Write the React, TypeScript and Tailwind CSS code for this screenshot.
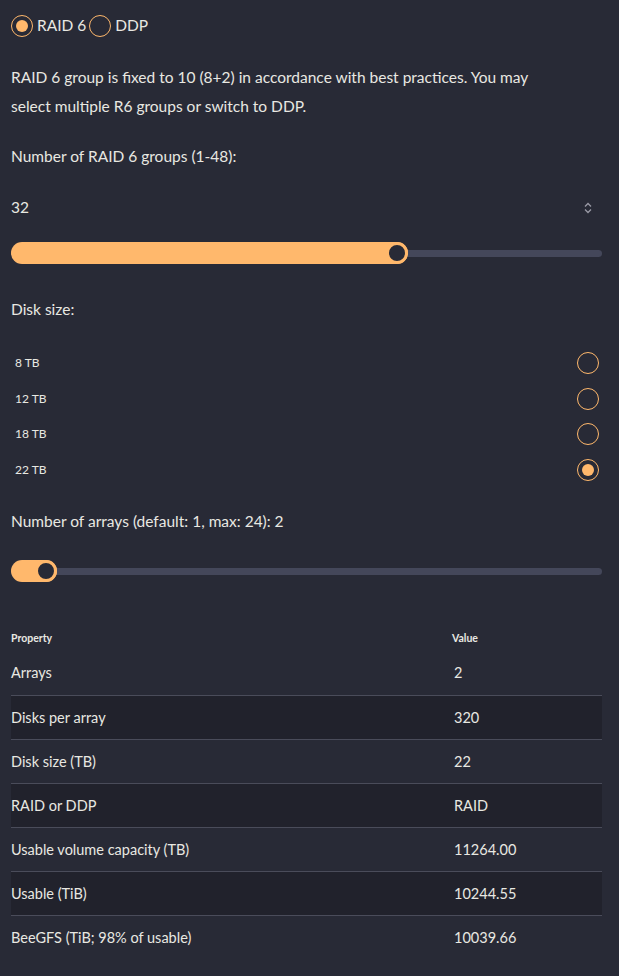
import React from 'react';

const disks = ['8 TB', '12 TB', '18 TB', '22 TB'];

const rows: [string, string][] = [
  ['Arrays', '2'],
  ['Disks per array', '320'],
  ['Disk size (TB)', '22'],
  ['RAID or DDP', 'RAID'],
  ['Usable volume capacity (TB)', '11264.00'],
  ['Usable (TiB)', '10244.55'],
  ['BeeGFS (TiB; 98% of usable)', '10039.66'],
];

function Radio({ checked }: { checked?: boolean }) {
  return (
    <span className="flex h-[22px] w-[22px] shrink-0 items-center justify-center rounded-full border border-[#ffb86c]">
      {checked && <span className="h-[12px] w-[12px] rounded-full bg-[#ffb86c]" />}
    </span>
  );
}

function Slider({ pct }: { pct: number }) {
  return (
    <div className="relative h-[22px] w-full">
      <div className="absolute left-0 right-0 top-[8px] h-[7px] rounded-full bg-[#44475a]" />
      <div
        className="absolute left-0 top-0 h-[22px] rounded-full bg-[#ffb86c]"
        style={{ width: `calc(${pct}% + 11px)` }}
      />
      <div
        className="absolute top-0 h-[22px] w-[22px] -translate-x-1/2 rounded-full border-[3px] border-[#ffb86c] bg-[#282a36]"
        style={{ left: `${pct}%` }}
      />
    </div>
  );
}

export default function App() {
  return (
    <div className="min-h-[976px] bg-[#282a36] px-[11px] pt-[15px] text-[15.5px] text-[#e8e8e2] font-['Lato','Liberation_Sans',sans-serif]">
      {/* mode */}
      <div className="flex items-center h-[22px]">
        <Radio checked />
        <span className="ml-[4px] mr-[3px]">RAID 6</span>
        <Radio />
        <span className="ml-[4px]">DDP</span>
      </div>

      <p className="mt-[26px] leading-[29px] max-w-[530px]">
        RAID 6 group is fixed to 10 (8+2) in accordance with best practices. You may select multiple R6 groups or switch
        to DDP.
      </p>

      <p className="mt-[21px] leading-[29px]">Number of RAID 6 groups (1-48):</p>

      <div className="mt-[22px] flex h-[29px] items-center justify-between pr-[16px]">
        <span>32</span>
        <svg width="8" height="12" viewBox="0 0 8 12" fill="none" stroke="#9a9aa6" strokeWidth="1.3">
          <path d="M1 4.5 L4 1.5 L7 4.5" />
          <path d="M1 7.5 L4 10.5 L7 7.5" />
        </svg>
      </div>

      <div className="mt-[20px] w-[591px]">
        <Slider pct={65.3} />
      </div>

      <p className="mt-[31px] leading-[29px]">Disk size:</p>

      <div className="mt-[28px] flex flex-col gap-[13.5px] w-[588px]">
        {disks.map((d, i) => (
          <div key={d} className="flex items-center justify-between pl-[4px]">
            <span className="text-[12px]">{d}</span>
            <Radio checked={i === 3} />
          </div>
        ))}
      </div>

      <p className="mt-[26px] leading-[29px]">Number of arrays (default: 1, max: 24): 2</p>

      <div className="mt-[24px] w-[591px]">
        <Slider pct={6} />
      </div>

      <table className="mt-[44px] w-[591px] border-collapse">
        <thead>
          <tr className="h-[26px]">
            <th className="text-left text-[10.5px] font-bold w-[441px]">Property</th>
            <th className="text-left text-[10.5px] font-bold">Value</th>
          </tr>
        </thead>
        <tbody>
          {rows.map(([k, v], i) => (
            <tr
              key={k}
              className={`h-[44px] ${i < rows.length - 1 ? 'border-b border-[#4a4c5a]' : ''} ${i % 2 === 1 ? 'bg-[#21222c]' : ''}`}
            >
              <td className="text-[14.5px]">{k}</td>
              <td className="text-[14.5px] pl-[2px]">{v}</td>
            </tr>
          ))}
        </tbody>
      </table>
    </div>
  );
}
